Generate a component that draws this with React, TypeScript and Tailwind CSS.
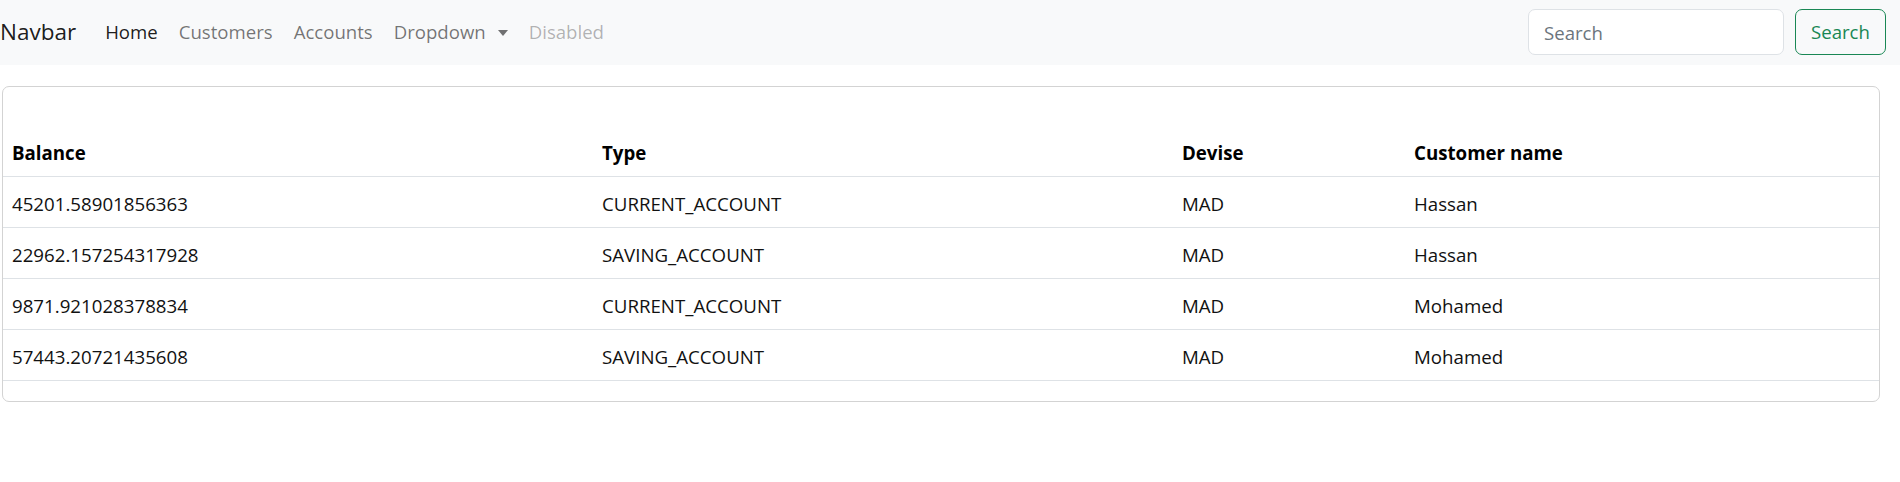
import React from "react";

const accounts = [
  { balance: "45201.58901856363", type: "CURRENT_ACCOUNT", devise: "MAD", customer: "Hassan" },
  { balance: "22962.157254317928", type: "SAVING_ACCOUNT", devise: "MAD", customer: "Hassan" },
  { balance: "9871.921028378834", type: "CURRENT_ACCOUNT", devise: "MAD", customer: "Mohamed" },
  { balance: "57443.20721435608", type: "SAVING_ACCOUNT", devise: "MAD", customer: "Mohamed" },
];

function Navbar() {
  return (
    <nav className="h-[65px] bg-[#f8f9fa] flex items-center pr-[14px] pb-[1px]">
      <span className="text-[22.5px] text-[rgba(0,0,0,0.9)] leading-none mr-[29px]">Navbar</span>
      <ul className="flex items-center gap-[21px] text-[18.6px]">
        <li className="text-[rgba(0,0,0,0.9)]">Home</li>
        <li className="text-[rgba(0,0,0,0.55)]">Customers</li>
        <li className="text-[rgba(0,0,0,0.55)]">Accounts</li>
        <li className="text-[rgba(0,0,0,0.55)] flex items-center gap-[12px]">
          Dropdown
          <svg width="10" height="6" viewBox="0 0 10 6" className="mt-[2px]">
            <path d="M0 0h10L5 6z" fill="currentColor" />
          </svg>
        </li>
        <li className="text-[rgba(0,0,0,0.3)]">Disabled</li>
      </ul>
      <form className="ml-auto flex items-center gap-[11px]">
        <input
          placeholder="Search"
          className="w-[256px] h-[46px] bg-white border border-[#dee2e6] rounded-[7px] px-[15px] text-[18.6px] placeholder:text-[#6c757d] outline-none"
        />
        <button
          type="button"
          className="w-[91px] h-[46px] border border-[#198754] rounded-[7px] text-[#198754] text-[18.6px]"
        >
          Search
        </button>
      </form>
    </nav>
  );
}

export default function App() {
  return (
    <div className="font-['Open_Sans',sans-serif] text-[#111] bg-white min-h-[482px]">
      <Navbar />
      <div className="mt-[21px] ml-[2px] w-[1878px] border border-[#d3d3d3] rounded-[7px] pt-[39px] pb-[20px]">
        <table className="w-full text-[18.7px] leading-[30px] border-collapse">
          <thead>
            <tr className="border-b border-[#dee2e6] text-left text-black">
              <th className="w-[590px] px-[9px] pt-[12px] pb-[8px] font-bold">Balance</th>
              <th className="w-[580px] px-[9px] pt-[12px] pb-[8px] font-bold">Type</th>
              <th className="w-[232px] px-[9px] pt-[12px] pb-[8px] font-bold">Devise</th>
              <th className="px-[9px] pt-[12px] pb-[8px] font-bold">Customer name</th>
            </tr>
          </thead>
          <tbody>
            {accounts.map((a, i) => (
              <tr key={i} className="border-b border-[#dee2e6]">
                <td className="px-[9px] pt-[12px] pb-[8px]">{a.balance}</td>
                <td className="px-[9px] pt-[12px] pb-[8px]">{a.type}</td>
                <td className="px-[9px] pt-[12px] pb-[8px]">{a.devise}</td>
                <td className="px-[9px] pt-[12px] pb-[8px]">{a.customer}</td>
              </tr>
            ))}
          </tbody>
        </table>
      </div>
    </div>
  );
}
